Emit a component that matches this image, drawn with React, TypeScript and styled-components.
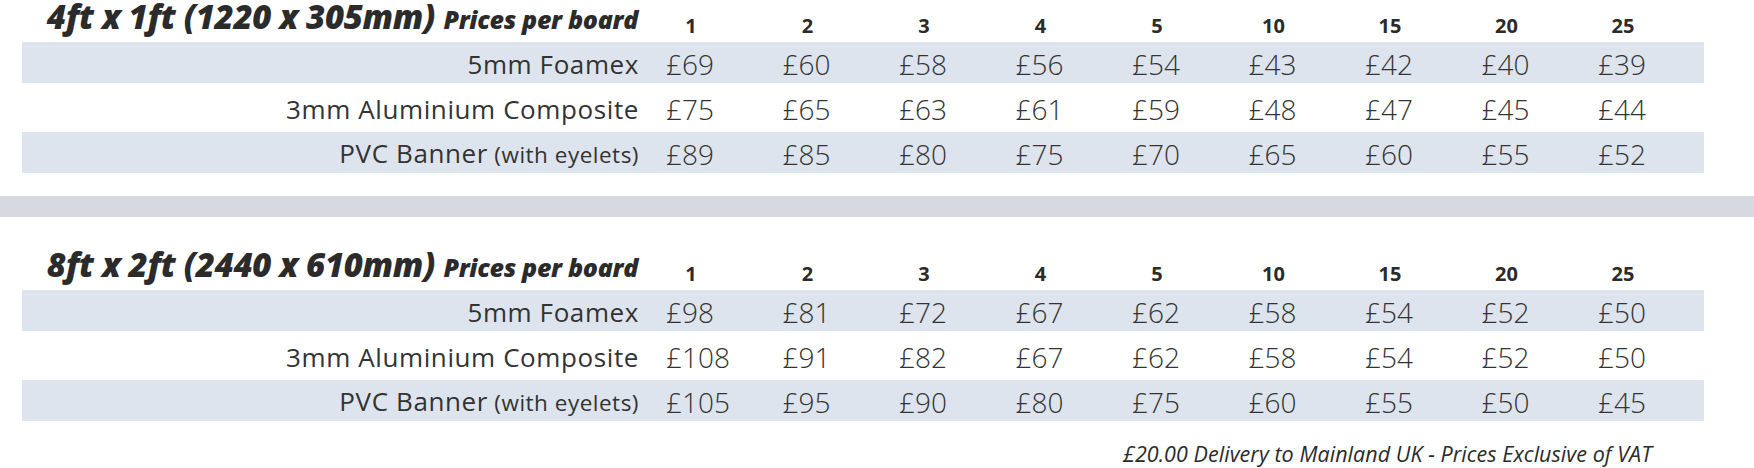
import React from 'react';
import styled, { createGlobalStyle } from 'styled-components';

const GlobalStyle = createGlobalStyle`
	html, body {
		margin: 0;
		padding: 0;
		background: #ffffff;
	}
	body {
		font-family: 'Open Sans', 'Liberation Sans', sans-serif;
		color: #333333;
	}
`;

const QUANTITIES = ['1', '2', '3', '4', '5', '10', '15', '20', '25'];

interface IProduct {
	name: string;
	note?: string;
	prices: number[];
}

interface ITable {
	size: string;
	products: IProduct[];
}

const tables: ITable[] = [
	{
		size: '4ft x 1ft (1220 x 305mm)',
		products: [
			{ name: '5mm Foamex', prices: [69, 60, 58, 56, 54, 43, 42, 40, 39] },
			{ name: '3mm Aluminium Composite', prices: [75, 65, 63, 61, 59, 48, 47, 45, 44] },
			{ name: 'PVC Banner', note: '(with eyelets)', prices: [89, 85, 80, 75, 70, 65, 60, 55, 52] }
		]
	},
	{
		size: '8ft x 2ft (2440 x 610mm)',
		products: [
			{ name: '5mm Foamex', prices: [98, 81, 72, 67, 62, 58, 54, 52, 50] },
			{ name: '3mm Aluminium Composite', prices: [108, 91, 82, 67, 62, 58, 54, 52, 50] },
			{ name: 'PVC Banner', note: '(with eyelets)', prices: [105, 95, 90, 80, 75, 60, 55, 50, 45] }
		]
	}
];

const Page = styled.div`
	width: 1754px;
	height: 468px;
	overflow: hidden;
	display: flex;
	flex-direction: column;
`;

const Section = styled.section`
	display: flex;
	flex-direction: column;
	gap: 4px;
	padding-left: 22px;
`;

const Grid = styled.div`
	display: grid;
	grid-template-columns: 644px repeat(8, 116.5px) 106px;
	width: 1682px;
`;

const HeaderRow = styled(Grid)`
	height: 38px;
	align-items: end;
`;

const Row = styled(Grid)<{ $shaded: boolean }>`
	height: 41px;
	align-items: center;
	background: ${({ $shaded }) => ($shaded ? '#dde4ee' : 'transparent')};
`;

const Title = styled.h2`
	margin: 0;
	padding: 0 28px 3px 0;
	text-align: right;
	white-space: nowrap;
	font-family: 'Open Sans', sans-serif;
	font-style: italic;
	font-weight: 800;
	font-size: 33px;
	line-height: 34px;
	color: #2b2b2b;
	letter-spacing: -0.3px;
`;

const TitleSub = styled.span`
	font-size: 25px;
	font-weight: 800;
`;

const Qty = styled.div`
	width: 50px;
	text-align: center;
	font-weight: 700;
	font-size: 20px;
	line-height: 26px;
	color: #2b2b2b;
`;

const Label = styled.div`
	padding: 2px 27px 0 0;
	text-align: right;
	white-space: nowrap;
	font-size: 26px;
	letter-spacing: 0.6px;
	line-height: 34px;
	color: #333333;
`;

const Note = styled.span`
	font-size: 22.5px;
	letter-spacing: 0.5px;
`;

const Price = styled.div`
	padding-top: 2px;
	white-space: nowrap;
	font-weight: 300;
	font-size: 28px;
	line-height: 34px;
	color: #333333;
`;

const Divider = styled.div`
	height: 21px;
	margin: 23px 0 31px;
	background: #d6d9df;
`;

const Footer = styled.p`
	margin: 19px 0 0;
	padding-right: 102px;
	text-align: right;
	font-style: italic;
	font-size: 21.5px;
	letter-spacing: 0.05px;
	line-height: 28px;
	color: #2b2b2b;
`;

const PriceTable = ({ table }: { table: ITable }) => (
	<Section>
		<HeaderRow>
			<Title>
				{table.size} <TitleSub>Prices per board</TitleSub>
			</Title>
			{QUANTITIES.map((q) => (
				<Qty key={q}>{q}</Qty>
			))}
		</HeaderRow>
		{table.products.map((product, i) => (
			<Row key={product.name} $shaded={i % 2 === 0}>
				<Label>
					{product.name}
					{product.note && <Note> {product.note}</Note>}
				</Label>
				{product.prices.map((price, j) => (
					<Price key={j}>£{price}</Price>
				))}
			</Row>
		))}
	</Section>
);

export default function App() {
	return (
		<>
			<GlobalStyle />
			<Page>
				<PriceTable table={tables[0]} />
				<Divider />
				<PriceTable table={tables[1]} />
				<Footer>£20.00 Delivery to Mainland UK - Prices Exclusive of VAT</Footer>
			</Page>
		</>
	);
}
